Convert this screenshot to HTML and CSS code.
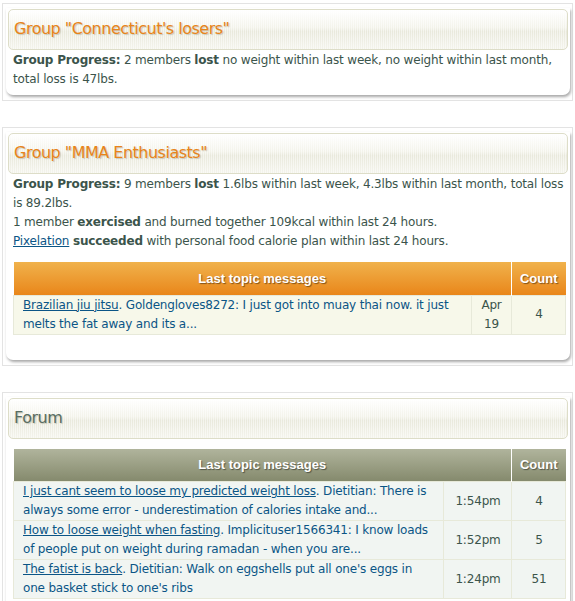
FILE: index.html
```html
<!DOCTYPE html>
<html lang="en">

<head>
  <meta charset="UTF-8">
  <meta name="viewport" content="width=device-width, initial-scale=1.0">
  <title>Groups</title>
  <link rel="stylesheet" href="styles.css">
</head>

<body>
  <div class="panel">
    <div class="box">
      <h2 class="title">Group "Connecticut's losers"</h2>
      <p class="info"><b>Group Progress:</b> 2 members <b>lost</b> no weight within last week, no weight within last month, total loss is 47lbs.</p>
    </div>
  </div>

  <div class="panel">
    <div class="box">
      <h2 class="title">Group "MMA Enthusiasts"</h2>
      <p class="info"><b>Group Progress:</b> 9 members <b>lost</b> 1.6lbs within last week, 4.3lbs within last month, total loss is 89.2lbs.<br>
        1 member <b>exercised</b> and burned together 109kcal within last 24 hours.<br>
        <a href="#">Pixelation</a> <b>succeeded</b> with personal food calorie plan within last 24 hours.</p>
      <table class="topics orange">
        <tr>
          <th colspan="2">Last topic messages</th>
          <th class="count">Count</th>
        </tr>
        <tr>
          <td class="msg"><a href="#">Brazilian jiu jitsu</a>. Goldengloves8272: I just got into muay thai now. it just melts the fat away and its a...</td>
          <td class="date narrow">Apr 19</td>
          <td class="count">4</td>
        </tr>
      </table>
    </div>
  </div>

  <div class="panel">
    <div class="box">
      <h2 class="title forum">Forum</h2>
      <table class="topics green">
        <tr>
          <th colspan="2">Last topic messages</th>
          <th class="count">Count</th>
        </tr>
        <tr>
          <td class="msg"><a href="#">I just cant seem to loose my predicted weight loss</a>. Dietitian: There is always some error - underestimation of calories intake and...</td>
          <td class="date">1:54pm</td>
          <td class="count">4</td>
        </tr>
        <tr>
          <td class="msg"><a href="#">How to loose weight when fasting</a>. Implicituser1566341: I know loads of people put on weight during ramadan - when you are...</td>
          <td class="date">1:52pm</td>
          <td class="count">5</td>
        </tr>
        <tr>
          <td class="msg"><a href="#">The fatist is back</a>. Dietitian: Walk on eggshells put all one's eggs in one basket stick to one's ribs</td>
          <td class="date">1:24pm</td>
          <td class="count">51</td>
        </tr>
      </table>
    </div>
  </div>
</body>

</html>
```

FILE: styles.css
```css
* {
  margin: 0;
  padding: 0;
  box-sizing: border-box;
}

body {
  background: #fff;
  color: #3b544b;
  font-family: 'DejaVu Sans', sans-serif;
  font-size: 12px;
  line-height: 19px;
  letter-spacing: -0.18px;
}

.panel {
  margin: 3px 2px 26px;
  border: 1px solid #e3e3e3;
  padding: 4px 2px 5px 3px;
}

.box {
  background: #fff;
  border-radius: 0 0 7px 7px;
  box-shadow: 1px 2px 3px rgba(0, 0, 0, 0.35);
  padding: 1px 2px 6px;
}

.title {
  height: 41px;
  border: 1px solid #ddddc8;
  border-radius: 5px;
  padding: 0 5px;
  font-family: 'DejaVu Sans', sans-serif;
  font-size: 16px;
  font-weight: normal;
  letter-spacing: -0.5px;
  line-height: 38px;
  color: #e8841a;
  text-shadow: 1px 1px 1px #c8c8b8;
  background:
    repeating-linear-gradient(90deg, rgba(255, 255, 255, 0.5) 0 1px, transparent 1px 2px),
    linear-gradient(#ffffff, #f3f3ea 45%, #e9e9dc 55%, #f4f4ec);
}

.title.forum {
  color: #596d62;
}

.info {
  padding: 1px 0 0 5px;
}

.info b {
  font-weight: bold;
}

a {
  color: #0b5586;
}

.topics {
  width: calc(100% - 7px);
  margin: 11px 2px 19px 5px;
  border-collapse: collapse;
  color: #0b5586;
}

.green {
  margin-top: 10px;
}

.topics th {
  height: 33px;
  color: #fff;
  font-family: 'Liberation Sans', sans-serif;
  font-size: 13px;
  font-weight: bold;
  letter-spacing: 0;
  text-shadow: 1px 1px 1px rgba(0, 0, 0, 0.45);
  border-left: 1px solid #fff;
}

.topics th:first-child {
  border-left: none;
}

.orange th {
  background: linear-gradient(#f0b24c, #e9861a);
}

.green th {
  background: linear-gradient(#b0b49c, #858a6d);
}

.topics td {
  padding: 0 8px 0 9px;
  border: 1px solid #e7e9d9;
  vertical-align: middle;
}

.orange td {
  background: #f7f8ea;
}

.green td {
  background: #f1f5f2;
}

.topics td.date,
.topics td.count {
  color: #3b544b;
  text-align: center;
}

.topics td.date {
  width: 68px;
}

.topics td.date.narrow {
  width: 40px;
  padding: 0 4px;
}

.topics .count {
  width: 54px;
}
```
